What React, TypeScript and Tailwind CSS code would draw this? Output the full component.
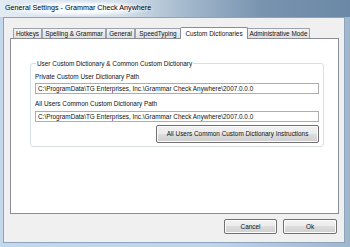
import React from "react";

const font = { fontFamily: '"Liberation Sans", Arial, sans-serif' };

function Tab({ label, w, selected }: { label: string; w: string; selected?: boolean }) {
  if (selected) {
    return (
      <div
        className={`${w} h-[12px] -mb-px -mx-px z-10 relative bg-white border border-[#898c95] border-b-0 flex items-center justify-center text-[6.4px] text-[#111] rounded-t-[2px]`}
      >
        {label}
      </div>
    );
  }
  return (
    <div
      className={`${w} h-[10px] bg-gradient-to-b from-[#f4f4f4] to-[#e0e0e0] border border-[#9ea2ab] border-b-0 flex items-center justify-center text-[6.4px] text-[#111] rounded-t-[1px]`}
    >
      {label}
    </div>
  );
}

function Button({ label, w }: { label: string; w: string }) {
  return (
    <div
      className={`${w} h-[15px] rounded-[2px] border border-[#707070] bg-[linear-gradient(#f2f2f2_0%,#ebebeb_50%,#dddddd_50%,#cfcfcf_100%)] flex items-center justify-center text-[6.4px] text-[#111] shadow-[inset_0_0_0_1px_#fcfcfc]`}
    >
      {label}
    </div>
  );
}

function TextBox({ value }: { value: string }) {
  return (
    <div className="h-[11px] border border-[#abadb3] border-t-[#abadb3] bg-white flex items-center px-[2px] text-[6.4px] text-[#111]">
      {value}
    </div>
  );
}

export default function App() {
  const path = "C:\\ProgramData\\TG Enterprises, Inc.\\Grammar Check Anywhere\\2007.0.0.0";
  return (
    <div
      className="w-[350px] h-[247px] overflow-hidden flex flex-col bg-[linear-gradient(90deg,#c4d8ec_0%,#b9cfe6_60%,#a9bfd6_100%)]"
      style={font}
    >
      <div className="h-[17px] shrink-0 flex items-center pl-[3px] text-[7.2px] text-black bg-[linear-gradient(90deg,#e2eaf2_0%,#d3dfea_35%,#9fb5ca_55%,#7893ae_75%,#6b88a6_100%)]">
        <span className="bg-[radial-gradient(ellipse_at_center,rgba(255,255,255,0.85)_40%,rgba(255,255,255,0)_75%)] px-[2px] py-[2px]">
          General Settings - Grammar Check Anywhere
        </span>
      </div>
      <div className="flex-1 flex pl-[3px] pr-[5px] pb-[4px] bg-[linear-gradient(90deg,#c4d8ec_0%,#c0d4ea_60%,#9fb6cd_100%)]">
        <div className="flex-1 border border-[#8ba3bd] bg-[#f0f0f0] flex flex-col pl-[6px] pr-[5px] pt-[8px] pb-[8px]">
          <div className="flex items-end pl-[3px] h-[12px]">
            <Tab label="Hotkeys" w="w-[29px]" />
            <Tab label="Spelling & Grammar" w="w-[64px]" />
            <Tab label="General" w="w-[29px]" />
            <Tab label="SpeedTyping" w="w-[46px]" />
            <Tab label="Custom Dictionaries" w="w-[68px]" selected />
            <Tab label="Administrative Mode" w="w-[63px]" />
          </div>
          <div className="h-[176px] bg-white border border-[#898c95] pl-[19px] pr-[14px] pt-[20px]">
            <fieldset className="border border-[#d5dfe5] rounded-[3px] px-[4px] pb-[3px] pt-0">
              <legend className="text-[6.4px] px-[1px] ml-px text-[#111]">
                User Custom Dictionary &amp; Common Custom Dictionary
              </legend>
              <div className="text-[6.4px] text-[#111] mt-[3px] mb-[2px]">Private Custom User Dictionary Path</div>
              <TextBox value={path} />
              <div className="text-[6.4px] text-[#111] mt-[5px] mb-[2px]">All Users Common Custom Dictionary Path</div>
              <TextBox value={path} />
              <div className="flex justify-end mt-[3px]">
                <Button label="All Users Common Custom Dictionary Instructions" w="w-[163px] h-[18px]" />
              </div>
            </fieldset>
          </div>
          <div className="flex-1" />
          <div className="flex justify-end gap-[6px] pr-[2px]">
            <Button label="Cancel" w="w-[53px]" />
            <Button label="Ok" w="w-[54px]" />
          </div>
        </div>
      </div>
    </div>
  );
}
